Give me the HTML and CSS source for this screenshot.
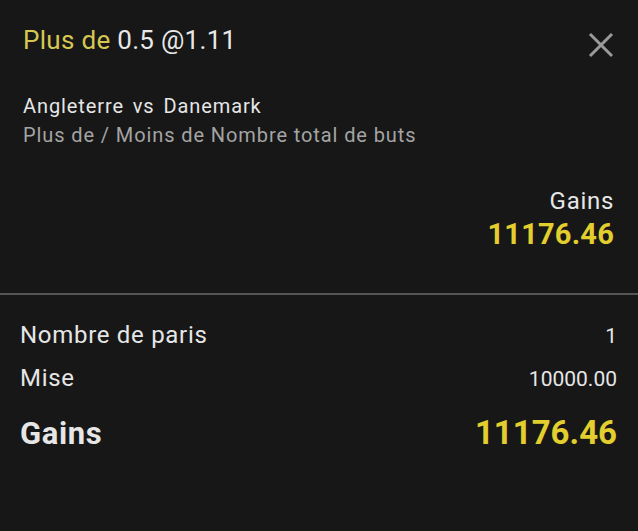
FILE: index.html
```html
<!DOCTYPE html>
<html lang="fr">
<head>
<meta charset="utf-8">
<link rel="stylesheet" href="styles.css">
</head>
<body>
<div class="slip">
  <section class="selection">
    <div class="head">
      <div class="title"><span class="hl">Plus de</span> 0.5 @1.11</div>
      <svg class="close" width="26" height="26" viewBox="0 0 26 26"><path d="M2 2 L24 24 M24 2 L2 24" stroke="#9a9a9a" stroke-width="3" fill="none"/></svg>
    </div>
    <div class="match">Angleterre vs&nbsp;Danemark</div>
    <div class="market">Plus de / Moins de Nombre total de buts</div>
    <div class="gains-box">
      <div class="gains-label">Gains</div>
      <div class="gains-value">11176.46</div>
    </div>
  </section>
  <hr class="divider">
  <section class="summary">
    <div class="row"><span class="lbl">Nombre de paris</span><span class="val">1</span></div>
    <div class="row"><span class="lbl">Mise</span><span class="val">10000.00</span></div>
    <div class="row total"><span class="lbl">Gains</span><span class="val">11176.46</span></div>
  </section>
</div>
</body>
</html>
```
FILE: styles.css
```css
html, body {
  margin: 0;
  padding: 0;
  background: #171717;
}
body {
  width: 638px;
  height: 531px;
  overflow: hidden;
  font-family: Roboto, "Noto Sans", sans-serif;
  color: #e6e6e6;
}
.selection {
  padding: 24px 24px 0 23px;
  height: 268px;
  box-sizing: border-box;
}
.head {
  display: flex;
  justify-content: space-between;
  align-items: flex-start;
}
.title {
  font-size: 26px;
  line-height: 32px;
  letter-spacing: 0.3px;
  color: #e8e8e8;
}
.hl {
  color: #d6c752;
}
.close {
  margin-top: 8px;
}
.match {
  margin-top: 32px;
  font-size: 20px;
  line-height: 32px;
  letter-spacing: 0.9px;
  word-spacing: 3px;
  color: #e6e6e6;
}
.market {
  font-size: 20px;
  line-height: 26px;
  letter-spacing: 0.9px;
  color: #a4a4a4;
}
.gains-box {
  margin-top: 37px;
  text-align: right;
}
.gains-label {
  font-size: 24px;
  line-height: 32px;
  letter-spacing: 0.7px;
  color: #e6e6e6;
}
.gains-value {
  font-size: 29px;
  line-height: 34px;
  font-weight: 700;
  letter-spacing: 0.2px;
  color: #e2ce2e;
}
.divider {
  margin: 25px 0 0 0;
  border: 0;
  height: 2px;
  background: #555555;
}
.summary {
  padding: 19px 21px 0 20px;
}
.row {
  display: flex;
  justify-content: space-between;
  align-items: baseline;
}
.row .lbl {
  font-size: 24px;
  line-height: 43px;
  letter-spacing: 0.7px;
  color: #e6e6e6;
}
.row .val {
  font-size: 21px;
  color: #e6e6e6;
}
.row.total {
  margin-top: 12px;
}
.row.total .lbl {
  font-size: 31px;
  font-weight: 700;
  letter-spacing: 0.6px;
}
.row.total .val {
  font-size: 33px;
  font-weight: 700;
  color: #e2ce2e;
}
```
